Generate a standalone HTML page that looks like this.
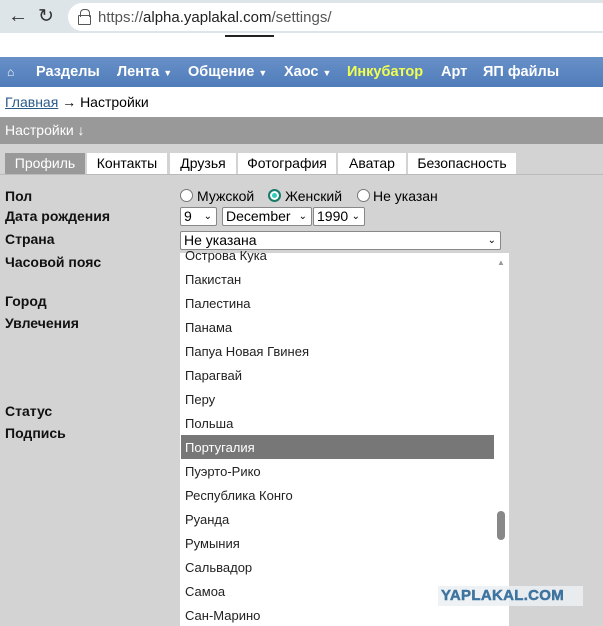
<!DOCTYPE html><html><head><meta charset="utf-8"><style>
body{margin:0;width:603px;height:626px;overflow:hidden;font-family:"Liberation Sans",sans-serif;background:#d3d3d3;position:relative}
.a{position:absolute}
.nav span{position:absolute;top:0}
.tab{position:absolute;top:153px;height:21px;background:#fff;font-size:14px;line-height:21px;text-align:center}
.lbl{position:absolute;left:5px;font-size:14px;font-weight:bold;color:#111}
.it{position:absolute;left:185px;font-size:13px;color:#222}
.sel{position:absolute;background:#fff;border:1px solid #888;border-radius:2px;font-size:14px;height:17px;line-height:17px;padding-left:3px;box-sizing:content-box}
.sel i{position:absolute;right:4px;top:0;font-style:normal;font-size:10px}
.rd{position:absolute;top:189px;width:11px;height:11px;border:1px solid #777;border-radius:50%;background:#fff}
.rt{position:absolute;top:188px;font-size:14px}
</style></head><body>
<div class="a" style="left:0;top:0;width:603px;height:33px;background:#dde5e9"></div>
<div class="a" style="left:8px;top:5px;font-size:20px;color:#333">←</div>
<div class="a" style="left:38px;top:5px;font-size:19px;color:#333">↻</div>
<div class="a" style="left:68px;top:3px;width:560px;height:28px;background:#fff;border-radius:14px"></div>
<div class="a" style="left:80px;top:9px;width:8px;height:7px;border:1.5px solid #555;border-bottom:none;border-radius:4px 4px 0 0"></div>
<div class="a" style="left:78px;top:15px;width:11px;height:8px;border:1.5px solid #555;border-radius:1px"></div>
<div class="a" style="left:98px;top:9px;font-size:15px;color:#555">https://<span style="color:#222">alpha.yaplakal.com</span>/settings/</div>
<div class="a" style="left:0;top:33px;width:603px;height:24px;background:#fff"></div>
<div class="a" style="left:225px;top:35px;width:49px;height:2px;background:#222"></div>
<div class="a nav" style="left:0;top:57px;width:603px;height:30px;background:linear-gradient(#6890c8,#4f7cba);color:#fff;font-weight:bold;font-size:14.5px;line-height:30px;white-space:nowrap">
<span style="left:7px;font-size:12px">⌂</span><span style="left:36px">Разделы</span><span style="left:117px">Лента <small style="font-size:9px">▼</small></span><span style="left:188px">Общение <small style="font-size:9px">▼</small></span><span style="left:284px">Хаос <small style="font-size:9px">▼</small></span><span style="left:347px;color:#f0ff50">Инкубатор</span><span style="left:441px">Арт</span><span style="left:483px">ЯП файлы</span></div>
<div class="a" style="left:0;top:87px;width:603px;height:30px;background:#fff"></div>
<div class="a" style="left:5px;top:94px;font-size:14px"><u style="color:#2a5a8a">Главная</u> → Настройки</div>
<div class="a" style="left:0;top:117px;width:603px;height:27px;background:#999;color:#fff;font-size:14px;line-height:27px;padding-left:5px;box-sizing:border-box">Настройки ↓</div>
<div class="tab" style="left:5px;width:80px;background:#999;color:#fff">Профиль</div>
<div class="tab" style="left:87px;width:80px">Контакты</div>
<div class="tab" style="left:170px;width:66px">Друзья</div>
<div class="tab" style="left:238px;width:98px">Фотография</div>
<div class="tab" style="left:338px;width:68px">Аватар</div>
<div class="tab" style="left:408px;width:108px">Безопасность</div>
<div class="a" style="left:0;top:174px;width:603px;height:1px;background:#bbb"></div>
<div class="lbl" style="top:188px">Пол</div>
<div class="lbl" style="top:208px">Дата рождения</div>
<div class="lbl" style="top:231px">Страна</div>
<div class="lbl" style="top:254px">Часовой пояс</div>
<div class="lbl" style="top:293px">Город</div>
<div class="lbl" style="top:315px">Увлечения</div>
<div class="lbl" style="top:403px">Статус</div>
<div class="lbl" style="top:425px">Подпись</div>
<div class="rd" style="left:180px"></div><div class="rt" style="left:197px">Мужской</div>
<div class="rd" style="left:268px;width:9px;height:9px;border:2px solid #1a7a6a;background:#3cb;box-shadow:inset 0 0 0 2px #fff"></div><div class="rt" style="left:285px">Женский</div>
<div class="rd" style="left:357px"></div><div class="rt" style="left:373px">Не указан</div>
<div class="sel" style="left:180px;top:207px;width:32px">9<i>⌄</i></div>
<div class="sel" style="left:222px;top:207px;width:85px">December<i>⌄</i></div>
<div class="sel" style="left:313px;top:207px;width:47px">1990<i>⌄</i></div>
<div class="sel" style="left:180px;top:231px;width:316px">Не указана<i>⌄</i></div>
<div class="a" style="left:180px;top:253px;width:329px;height:373px;background:#fff;overflow:hidden">
<div class="a" style="left:1px;top:182px;width:313px;height:24px;background:#777"></div>
<div class="a" style="left:317px;top:258px;width:8px;height:29px;background:#888;border-radius:4px"></div>
<div class="a" style="left:317px;top:5px;font-size:8px;color:#999">▲</div>
</div>
<div class="it" style="top:248px">Острова Кука</div>
<div class="it" style="top:272px">Пакистан</div>
<div class="it" style="top:296px">Палестина</div>
<div class="it" style="top:320px">Панама</div>
<div class="it" style="top:344px">Папуа Новая Гвинея</div>
<div class="it" style="top:368px">Парагвай</div>
<div class="it" style="top:392px">Перу</div>
<div class="it" style="top:416px">Польша</div>
<div class="it" style="top:440px;color:#fff">Португалия</div>
<div class="it" style="top:464px">Пуэрто-Рико</div>
<div class="it" style="top:488px">Республика Конго</div>
<div class="it" style="top:512px">Руанда</div>
<div class="it" style="top:536px">Румыния</div>
<div class="it" style="top:560px">Сальвадор</div>
<div class="it" style="top:584px">Самоа</div>
<div class="it" style="top:608px">Сан-Марино</div>
<div class="a" style="left:438px;top:586px;width:145px;height:20px;background:rgba(235,240,243,.85)"></div>
<div class="a" style="left:441px;top:587px;font-size:15px;font-weight:bold;color:#3f74a0;letter-spacing:0.3px;-webkit-text-stroke:0.5px #3f74a0">YAPLAKAL.COM</div>
</body></html>
